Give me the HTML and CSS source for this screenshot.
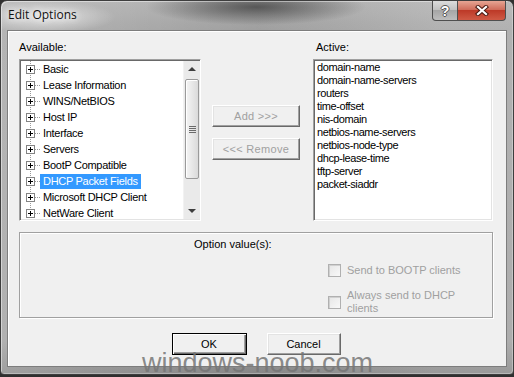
FILE: index.html
```html
<!DOCTYPE html>
<html lang="en">
<head>
	<meta charset="UTF-8">
	<title>Edit Options</title>
	<link rel="stylesheet" href="styles.css">
</head>
<body>
	<div class="window">
		<div class="titlebar">
			<span class="title">Edit Options</span>
			<div class="caption">
				<span class="cap-btn help">?</span>
				<span class="cap-btn close">
					<svg width="14" height="11" viewBox="0 0 14 11">
						<path d="M3 2 L11 9 M11 2 L3 9" stroke="#4a1a12" stroke-width="4.2" stroke-linecap="square"/>
						<path d="M3 2 L11 9 M11 2 L3 9" stroke="#fff" stroke-width="2.2" stroke-linecap="square"/>
					</svg>
				</span>
			</div>
		</div>

		<div class="client">
			<div class="lists">
				<div class="col">
					<div class="label">Available:</div>
					<div class="listbox tree-box">
						<ul class="tree">
							<li><i class="plus"></i><b class="dots"></b><span>Basic</span></li>
							<li><i class="plus"></i><b class="dots"></b><span>Lease Information</span></li>
							<li><i class="plus"></i><b class="dots"></b><span>WINS/NetBIOS</span></li>
							<li><i class="plus"></i><b class="dots"></b><span>Host IP</span></li>
							<li><i class="plus"></i><b class="dots"></b><span>Interface</span></li>
							<li><i class="plus"></i><b class="dots"></b><span>Servers</span></li>
							<li><i class="plus"></i><b class="dots"></b><span>BootP Compatible</span></li>
							<li><i class="plus"></i><b class="dots"></b><span class="sel">DHCP Packet Fields</span></li>
							<li><i class="plus"></i><b class="dots"></b><span>Microsoft DHCP Client</span></li>
							<li><i class="plus"></i><b class="dots"></b><span>NetWare Client</span></li>
						</ul>
						<div class="scrollbar">
							<div class="arrow up"></div>
							<div class="track"><div class="thumb"><i></i></div></div>
							<div class="arrow down"></div>
						</div>
					</div>
				</div>

				<div class="mid">
					<button class="btn wide" disabled>Add &gt;&gt;&gt;</button>
					<button class="btn wide" disabled>&lt;&lt;&lt; Remove</button>
				</div>

				<div class="col">
					<div class="label active-label">Active:</div>
					<ul class="listbox active-list">
						<li>domain-name</li>
						<li>domain-name-servers</li>
						<li>routers</li>
						<li>time-offset</li>
						<li>nis-domain</li>
						<li>netbios-name-servers</li>
						<li>netbios-node-type</li>
						<li>dhcp-lease-time</li>
						<li>tftp-server</li>
						<li>packet-siaddr</li>
					</ul>
				</div>
			</div>

			<div class="group">
				<div class="group-title">Option value(s):</div>
				<div class="checks">
					<label class="check"><i class="box"></i><span>Send to BOOTP clients</span></label>
					<label class="check"><i class="box"></i><span>Always send to DHCP<br>clients</span></label>
				</div>
			</div>

			<div class="actions">
				<button class="btn default">OK</button>
				<button class="btn cancel">Cancel</button>
			</div>
		</div>

		<div class="watermark">windows-noob.com</div>
	</div>
</body>
</html>
```

FILE: styles.css
```css
* {
	box-sizing: border-box;
}
body {
	margin: 0;
	width: 514px;
	height: 377px;
	overflow: hidden;
	background: #2f2f2f;
	font-family: "Liberation Sans", Arial, sans-serif;
	font-size: 11px;
	color: #000;
}
ul {
	margin: 0;
	padding: 0;
	list-style: none;
}

/* window frame */
.window {
	position: relative;
	width: 514px;
	height: 375px;
	display: flex;
	flex-direction: column;
	border: 1px solid #3e3e3e;
	border-radius: 7px 7px 4px 4px;
	background:
		radial-gradient(ellipse 110px 18px at 255px 6px, rgba(60,60,60,.75), rgba(60,60,60,0)),
		radial-gradient(ellipse 70px 16px at 45px 16px, rgba(255,255,255,.6), rgba(255,255,255,0)),
		linear-gradient(90deg, rgba(255,255,255,.15), rgba(255,255,255,0) 30%, rgba(0,0,0,.05) 50%, rgba(255,255,255,.1) 85%),
		linear-gradient(#b4b4b4, #a8a8a8 28px, #a4a4a4 340px, #8e8e8e);
	box-shadow: inset 1px 1px rgba(255,255,255,.45), inset -1px -1px rgba(255,255,255,.3);
}
.titlebar {
	height: 29px;
	display: flex;
	align-items: flex-start;
}
.title {
	margin: 6px 0 0 7px;
	font-family: "Open Sans", "Liberation Sans", sans-serif;
	font-size: 12px;
	line-height: 16px;
	color: #111;
	text-shadow: 0 0 6px #fff, 0 0 10px rgba(255,255,255,.8);
}
.caption {
	margin-left: auto;
	margin-right: 7px;
	display: flex;
}
.cap-btn {
	height: 20px;
	display: flex;
	align-items: center;
	justify-content: center;
	border: 1px solid #4e4e4e;
	border-top: none;
}
.help {
	width: 26px;
	border-radius: 0 0 0 4px;
	background: linear-gradient(#dcdcdc, #c2c2c2 45%, #a6a6a6 50%, #bdbdbd);
	font-weight: bold;
	font-size: 14px;
	color: #fff;
	text-shadow: 1px 0 #555, -1px 0 #555, 0 1px #555, 0 -1px #555;
}
.close {
	width: 48px;
	border-left: none;
	border-radius: 0 0 4px 0;
	background: linear-gradient(#e6a594, #d06d5b 45%, #bd3a28 50%, #cf5a45);
}

/* client area */
.client {
	margin: 0 6px;
	height: 337px;
	border: 1px solid #7d7d7d;
	background: #f0f0f0;
	box-shadow: inset 1px 1px #fff;
	padding: 10px 0 0 11px;
}
.lists {
	display: grid;
	grid-template-columns: 182px 112px 180px;
}
.label {
	height: 18px;
	line-height: 13px;
}
.active-label {
	padding-left: 3px;
}
.listbox {
	height: 162px;
	border: 1px solid;
	border-color: #a0a0a0 #fff #fff #a0a0a0;
	padding: 1px;
	background: #fff;
	box-shadow: inset 1px 1px #696969, inset -1px -1px #e3e3e3;
	overflow: hidden;
}
.tree-box {
	display: flex;
	padding-right: 0;
}

/* tree */
.tree {
	flex: 1;
	background-image: linear-gradient(#9a9a9a 50%, transparent 50%);
	background-size: 1px 2px;
	background-repeat: repeat-y;
	background-position: 9px 0;
	letter-spacing: -0.3px;
}
.tree li {
	height: 16px;
	display: flex;
	align-items: center;
	white-space: nowrap;
}
.plus {
	position: relative;
	width: 9px;
	height: 9px;
	margin-left: 5px;
	border: 1px solid #848484;
	background: #fff;
}
.plus::before,
.plus::after {
	content: "";
	position: absolute;
	background: #000;
}
.plus::before {
	left: 1px;
	top: 3px;
	width: 5px;
	height: 1px;
}
.plus::after {
	left: 3px;
	top: 1px;
	width: 1px;
	height: 5px;
}
.dots {
	width: 5px;
	height: 1px;
	background-image: linear-gradient(90deg, #9a9a9a 50%, transparent 50%);
	background-size: 2px 1px;
}
.tree span {
	height: 15px;
	line-height: 15px;
	padding: 0 3px 0 3px;
}
.tree span.sel {
	background: #3399ff;
	color: #fff;
}

/* scrollbar */
.scrollbar {
	width: 17px;
	display: flex;
	flex-direction: column;
	background: #eaeaea;
	border-left: 1px solid #f2f2f2;
}
.arrow {
	height: 17px;
	position: relative;
}
.arrow::after {
	content: "";
	position: absolute;
	left: 4px;
	border-left: 4px solid transparent;
	border-right: 4px solid transparent;
}
.arrow.up::after {
	top: 6px;
	border-bottom: 4px solid #3e3e3e;
}
.arrow.down::after {
	top: 7px;
	border-top: 4px solid #3e3e3e;
}
.track {
	flex: 1;
	padding: 1px 0 0 0;
}
.thumb {
	height: 100px;
	margin: 0 1px;
	border: 1px solid #9a9a9a;
	border-radius: 2px;
	background: linear-gradient(90deg, #f4f4f4, #e8e8e8 50%, #dadada);
	box-shadow: inset 1px 1px #fff;
	display: flex;
	align-items: center;
	justify-content: center;
}
.thumb i {
	width: 7px;
	height: 7px;
	background: repeating-linear-gradient(#6a6a6a 0 1px, transparent 1px 2px);
}

/* middle buttons */
.mid {
	padding: 64px 0 0 11px;
	display: flex;
	flex-direction: column;
	gap: 11px;
}
.btn {
	font: inherit;
	font-weight: normal;
	height: 22px;
	padding: 0;
	background: #f0f0f0;
	color: #000;
	border: 1px solid;
	border-color: #fff #696969 #696969 #fff;
	box-shadow: inset -1px -1px #a0a0a0, inset 1px 1px #e3e3e3;
}
.btn:disabled {
	color: #a0a0a0;
}
.wide {
	width: 88px;
	letter-spacing: 0.3px;
}

/* active list */
.active-list {
	padding-left: 3px;
	letter-spacing: -0.4px;
}
.active-list li {
	line-height: 13px;
	white-space: nowrap;
}

/* option values */
.group {
	margin-top: 11px;
	width: 474px;
	height: 86px;
	border: 1px solid #a0a0a0;
	box-shadow: inset 1px 1px #fff, 1px 1px #fff;
	padding-top: 5px;
}
.group-title {
	padding-left: 174px;
	line-height: 13px;
}
.checks {
	margin: 13px 0 0 308px;
	display: flex;
	flex-direction: column;
	gap: 12px;
	color: #a0a0a0;
}
.check {
	display: flex;
	align-items: center;
	gap: 6px;
	line-height: 13px;
}
.box {
	width: 13px;
	height: 13px;
	border: 1px solid #b0b0b0;
	background: linear-gradient(135deg, #e6e6e6, #f8f8f8);
	box-shadow: inset 1px 1px #d0d0d0;
}

/* OK / Cancel */
.actions {
	width: 474px;
	margin-top: 15px;
	display: flex;
	justify-content: center;
	gap: 20px;
}
.default {
	width: 75px;
	border: 1px solid #000;
	box-shadow: inset 1px 1px #fff, inset -1px -1px #696969, inset -2px -2px #a0a0a0;
}
.cancel {
	width: 74px;
}

.watermark {
	position: absolute;
	left: 141px;
	top: 349px;
	font-family: "Liberation Sans", Arial, sans-serif;
	font-size: 27px;
	line-height: 27px;
	color: rgba(118,118,118,.85);
	white-space: nowrap;
}
```
